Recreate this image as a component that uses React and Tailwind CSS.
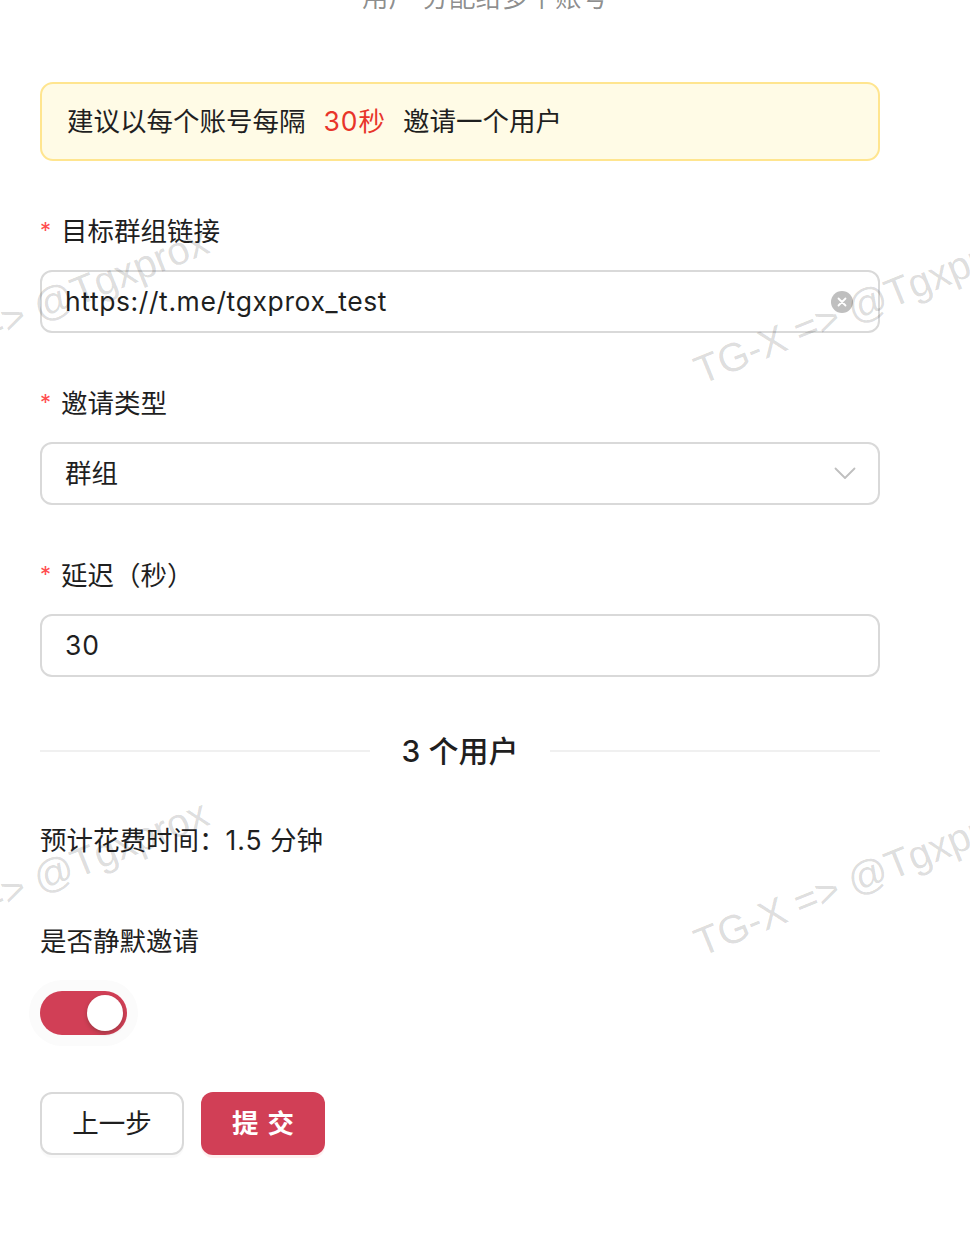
import React from 'react';

const Watermark = ({ left, top }) => (
  <div
    className="absolute whitespace-nowrap origin-left -rotate-[22deg] font-['Liberation_Sans',Arial,sans-serif] text-[40px] leading-[40px] text-black/15 select-none"
    style={{ left, top }}
  >
    TG-X =&gt; @Tgxprox
  </div>
);

const Label = ({ children, required }) => (
  <div className="flex items-center h-10 text-[26.5px] text-[#1f1f1f]">
    {required && <span className="text-[#ff4d4f] text-[22px] mr-[10px] -mt-1">*</span>}
    <span>{children}</span>
  </div>
);

const App = () => {
  return (
    <div className="relative w-[970px] h-[1250px] overflow-hidden bg-white font-[Inter,'Noto_Sans_CJK_SC',sans-serif]">
      <div className="flex flex-col w-[840px] ml-10">
        {/* step description, scrolled past */}
        <div className="-mt-[23px] h-10 leading-10 text-[26.5px] text-black/45 text-center pl-[50px]">
          用户 分配给多个账号
        </div>

        {/* tip */}
        <div className="mt-[65px] h-[79px] flex items-center px-[25px] rounded-[13px] border-2 border-[#ffe58f] bg-[#fffbe6] text-[26.5px] text-[#1f1f1f]">
          <span>建议以每个账号每隔</span>
          <span className="text-[#e8352a] mx-[18px]"><span className="tracking-[1px]">30</span>秒</span>
          <span>邀请一个用户</span>
        </div>

        <div className="mt-[51px]">
          <Label required>目标群组链接</Label>
        </div>
        <div className="mt-[18px] h-[63px] flex items-center justify-between pl-[23px] pr-[24px] rounded-[12px] border-2 border-[#d9d9d9] text-[26.5px] text-[#1f1f1f]">
          <span className="tracking-[0.6px]">https://t.me/tgxprox_test</span>
          <svg width="24" height="24" viewBox="0 0 24 24">
            <circle cx="12" cy="12" r="11" fill="#bfbfbf" />
            <path d="M8.5 8.5 L15.5 15.5 M15.5 8.5 L8.5 15.5" stroke="#fff" strokeWidth="1.8" strokeLinecap="round" />
          </svg>
        </div>

        <div className="mt-[51px]">
          <Label required>邀请类型</Label>
        </div>
        <div className="mt-[18px] h-[63px] flex items-center justify-between pl-[23px] pr-[22px] rounded-[12px] border-2 border-[#d9d9d9] text-[26.5px] text-[#1f1f1f]">
          <span>群组</span>
          <svg width="22" height="13" viewBox="0 0 22 13" fill="none">
            <path d="M1.5 1.5 L11 11 L20.5 1.5" stroke="#bfbfbf" strokeWidth="1.8" strokeLinecap="round" strokeLinejoin="round" />
          </svg>
        </div>

        <div className="mt-[51px]">
          <Label required>延迟（秒）</Label>
        </div>
        <div className="mt-[18px] h-[63px] flex items-center pl-[23px] rounded-[12px] border-2 border-[#d9d9d9] text-[26.5px] text-[#1f1f1f]">
          <span className="tracking-[1px]">30</span>
        </div>

        {/* divider */}
        <div className="mt-[54px] h-10 flex items-center">
          <div className="flex-1 h-[2px] bg-[#f0f0f0]" />
          <span className="px-8 text-[30px] font-medium text-[#1f1f1f]">3 个用户</span>
          <div className="flex-1 h-[2px] bg-[#f0f0f0]" />
        </div>

        <div className="mt-[49px] h-10 leading-10 text-[26.5px] text-[#1f1f1f]">
          预计花费时间：<span className="tracking-[1px]">1.5</span> 分钟
        </div>

        <div className="mt-[62px]">
          <Label>是否静默邀请</Label>
        </div>
        <div className="mt-[29px]">
          <button className="flex items-center justify-end w-[87px] h-[44px] p-1 rounded-full bg-[#d13f56] shadow-[0_0_0_11px_#fbfbfb]">
            <span className="w-9 h-9 rounded-full bg-white shadow-[0_2px_4px_rgba(0,35,11,0.25)]" />
          </button>
        </div>

        <div className="mt-[57px] flex gap-[17px]">
          <button className="w-[144px] h-[63px] flex items-center justify-center rounded-[12px] border-2 border-[#d9d9d9] bg-white text-[26.5px] text-[#1f1f1f] shadow-[0_3px_0_rgba(0,0,0,0.02)]">
            上一步
          </button>
          <button className="w-[124px] h-[63px] flex items-center justify-center rounded-[12px] bg-[#d13f56] text-[26.5px] font-bold text-white shadow-[0_3px_0_rgba(255,5,5,0.06)]">
            <span className="tracking-[0.34em] -mr-[0.34em]">提交</span>
          </button>
        </div>
      </div>

      {/* watermark overlay */}
      <div className="absolute inset-0 pointer-events-none">
        <Watermark left={-118} top={350} />
        <Watermark left={696} top={352} />
        <Watermark left={-118} top={922} />
        <Watermark left={696} top={924} />
      </div>
    </div>
  );
};

export default App;
